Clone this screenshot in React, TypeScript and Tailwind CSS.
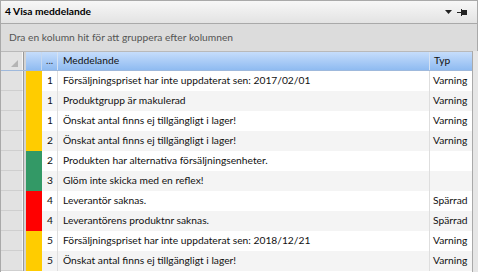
import React from 'react';

type Row = { sev: number; msg: string; typ: string };

const ROWS: Row[] = [
  { sev: 1, msg: 'Försäljningspriset har inte uppdaterat sen: 2017/02/01', typ: 'Varning' },
  { sev: 1, msg: 'Produktgrupp är makulerad', typ: 'Varning' },
  { sev: 1, msg: 'Önskat antal finns ej tillgängligt i lager!', typ: 'Varning' },
  { sev: 2, msg: 'Önskat antal finns ej tillgängligt i lager!', typ: 'Varning' },
  { sev: 2, msg: 'Produkten har alternativa försäljningsenheter.', typ: '' },
  { sev: 3, msg: 'Glöm inte skicka med en reflex!', typ: '' },
  { sev: 4, msg: 'Leverantör saknas.', typ: 'Spärrad' },
  { sev: 4, msg: 'Leverantörens produktnr saknas.', typ: 'Spärrad' },
  { sev: 5, msg: 'Försäljningspriset har inte uppdaterat sen: 2018/12/21', typ: 'Varning' },
  { sev: 5, msg: 'Önskat antal finns ej tillgängligt i lager!', typ: 'Varning' },
];

const colorFor = (r: Row, i: number) => {
  if (r.sev === 4) return 'bg-[#ff0000]';
  if (i === 4 || i === 5) return 'bg-[#339966]';
  return 'bg-[#ffcc00]';
};

export default function App() {
  return (
    <div className="w-[478px] h-[272px] overflow-hidden bg-[#e9e9e9] font-['Lato',sans-serif] text-[10.25px] text-[#111] flex flex-col">
      {/* title bar */}
      <div className="h-[24px] shrink-0 flex items-center justify-between pl-[4px] pr-[9px] border border-[#a9a9a9] bg-gradient-to-b from-[#f7f7f7] to-[#e3e3e3]">
        <span className="font-bold text-[10.25px] text-black">4 Visa meddelande</span>
        <div className="flex items-center gap-[5px]">
          <svg width="7" height="4" viewBox="0 0 7 4">
            <path d="M0 0h7L3.5 4z" fill="#222" />
          </svg>
          <svg width="11" height="7" viewBox="0 0 11 7">
            <rect x="0" y="3" width="4" height="1" fill="#222" />
            <rect x="4" y="1" width="6" height="5" fill="#222" />
            <rect x="4" y="0" width="1" height="7" fill="#222" />
          </svg>
        </div>
      </div>

      {/* group panel */}
      <div className="h-[27px] shrink-0 flex items-center pl-[8px] bg-[#dcdcdc] border-l border-r border-[#a9a9a9] text-[#555]">
        Dra en kolumn hit för att gruppera efter kolumnen
      </div>

      {/* grid */}
      <div className="flex-1 flex border-l border-[#a9a9a9] bg-white">
        <div className="w-[471px] flex flex-col border-t border-[#b9b9b9]">
          {/* header */}
          <div className="h-[19px] shrink-0 flex border-b border-[#9fb9dc]">
            <div className="w-[22px] shrink-0 bg-[#e2e2e2] border-r border-[#f6f6f6] flex items-end justify-end pr-[4px] pb-[3px]">
              <svg width="7" height="7" viewBox="0 0 7 7">
                <path d="M7 0v7H0z" fill="#b4b4b4" />
              </svg>
            </div>
            <div className="w-[3px] shrink-0 bg-[#d4d4d4] border-l border-[#9a9a9a]" />
            <div className="w-[16px] shrink-0 bg-gradient-to-b from-[#c6ddfb] to-[#8fbbf1] border-r border-[#c6d8f0]" />
            <div className="w-[16px] shrink-0 bg-gradient-to-b from-[#c6ddfb] to-[#8fbbf1] border-r border-[#d6e2f2] flex items-center pl-[4px] text-[#333]">
              ...
            </div>
            <div className="w-[372px] shrink-0 bg-gradient-to-b from-[#c6ddfb] to-[#8fbbf1] border-r border-[#d6e2f2] flex items-center pl-[5px]">
              Meddelande
            </div>
            <div className="flex-1 bg-gradient-to-b from-[#c6ddfb] to-[#8fbbf1] flex items-center pl-[4px]">
              Typ
            </div>
          </div>

          {/* rows */}
          {ROWS.map((r, i) => (
            <div key={i} className={`h-[20px] shrink-0 flex ${i % 2 === 1 ? 'bg-[#f4f4f4]' : 'bg-white'}`}>
              <div className="w-[22px] shrink-0 bg-[#e2e2e2] border-r border-[#f6f6f6] border-b border-b-[#cfcfcf]" />
              <div className="w-[3px] shrink-0 bg-[#d4d4d4] border-l border-[#9a9a9a]" />
              <div className={`w-[16px] shrink-0 ${colorFor(r, i)}`} />
              <div className="w-[16px] shrink-0 flex items-center pl-[5px] border-r border-[#dedede]">{r.sev}</div>
              <div className="w-[372px] shrink-0 flex items-center pl-[5px] border-r border-[#dedede] whitespace-nowrap">
                {r.msg}
              </div>
              <div className="flex-1 flex items-center pl-[3px] whitespace-nowrap">{r.typ}</div>
            </div>
          ))}
        </div>
        <div className="flex-1 border-l border-[#a9a9a9] bg-[#e6e6e6]" />
      </div>
    </div>
  );
}
